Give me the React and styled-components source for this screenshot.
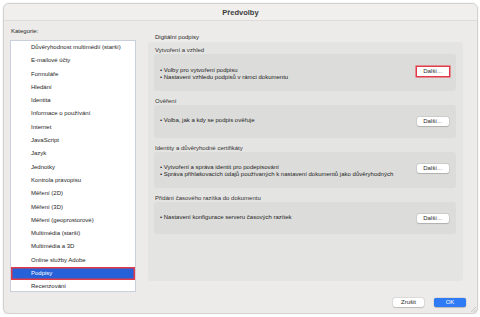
import React from "react";
import styled, { createGlobalStyle } from "styled-components";

const GlobalStyle = createGlobalStyle`
  html, body {
    margin: 0;
    padding: 0;
    background: #ffffff;
  }
  body {
    font-family: "Liberation Sans", Arial, sans-serif;
  }
`;

const Window = styled.div`
  position: relative;
  box-sizing: border-box;
  margin: 3px 0 0 3px;
  width: 475px;
  height: 311px;
  display: flex;
  flex-direction: column;
  background: #ecebe9;
  border: 0.5px solid #d2d1cf;
  border-radius: 6px;
  box-shadow: 0 0.5px 2px rgba(0, 0, 0, 0.12);
  overflow: hidden;
`;

const TitleBar = styled.div`
  height: 16px;
  flex: none;
  display: flex;
  align-items: center;
  justify-content: center;
  background: #f0efee;
  border-bottom: 1px solid #dddcda;
  font-size: 7.5px;
  font-weight: 700;
  color: #3a3a3a;
`;

const Body = styled.div`
  display: flex;
  gap: 12px;
  padding: 6px 14px 0 6px;
`;

const LeftColumn = styled.div`
  width: 126px;
  flex: none;
  display: flex;
  flex-direction: column;
`;

const FieldLabel = styled.div`
  height: 8px;
  line-height: 8px;
  font-size: 6px;
  color: #2a2a2a;
  padding-left: 1px;
  margin-bottom: ${(p) => p.$gap || 0}px;
`;

const CategoryList = styled.ul`
  list-style: none;
  margin: 0;
  padding: 0;
  box-sizing: border-box;
  height: 252px;
  background: #ffffff;
  border: 0.5px solid #c9cfdb;
  overflow: hidden;
`;

const CategoryItem = styled.li`
  box-sizing: border-box;
  height: 13.3px;
  line-height: 13.3px;
  padding-left: 20px;
  font-size: 6px;
  white-space: nowrap;
  color: ${(p) => (p.$selected ? "#ffffff" : "#1e1e1e")};
  background: ${(p) => (p.$selected ? "#2761d8" : "transparent")};
  box-shadow: ${(p) => (p.$selected ? "inset 0 0 0 1.5px #e23a48" : "none")};
`;

const RightColumn = styled.div`
  flex: 1;
  display: flex;
  flex-direction: column;
  padding-top: 6px;
`;

const GroupTitle = styled.div`
  height: 8px;
  line-height: 8px;
  font-size: 6px;
  color: #2a2a2a;
  padding-left: 7px;
  margin-bottom: 1px;
`;

const GroupBox = styled.div`
  box-sizing: border-box;
  height: 239px;
  background: #e4e4e2;
  border-radius: 3px;
  padding: 4px 7px 0 6px;
  display: flex;
  flex-direction: column;
  gap: 6px;
`;

const Section = styled.div`
  display: flex;
  flex-direction: column;
`;

const SectionLabel = styled.div`
  height: 8px;
  line-height: 8px;
  font-size: 6px;
  color: #333;
  padding-left: 1px;
`;

const SectionBox = styled.div`
  box-sizing: border-box;
  height: ${(p) => p.$h}px;
  padding: ${(p) => p.$top}px 7px 0 6px;
  background: #dcdcda;
  border-radius: 3px;
  display: flex;
  align-items: flex-start;
  justify-content: space-between;
`;

const Bullets = styled.div`
  display: flex;
  flex-direction: column;
`;

const Bullet = styled.div`
  height: 7px;
  line-height: 7px;
  font-size: 6px;
  color: #1e1e1e;
  white-space: nowrap;
`;

const PushButton = styled.button`
  box-sizing: border-box;
  flex: none;
  width: ${(p) => p.$w || 32}px;
  height: 9px;
  padding: 0;
  margin: 0;
  border: none;
  border-radius: ${(p) => (p.$highlight ? 0 : 2)}px;
  background: ${(p) => (p.$primary ? "#2f7bf5" : "#ffffff")};
  color: ${(p) => (p.$primary ? "#ffffff" : "#2a2a2a")};
  font-family: "Liberation Sans", Arial, sans-serif;
  font-size: 6px;
  line-height: 9px;
  box-shadow: ${(p) =>
    p.$highlight
      ? "0 0 0 1.5px #e23a48"
      : "0 0 0 0.5px rgba(0, 0, 0, 0.12), 0 0.5px 1px rgba(0, 0, 0, 0.15)"};
`;

const Footer = styled.div`
  display: flex;
  justify-content: flex-end;
  gap: 10px;
  padding: 6px 11px 0 0;
`;

const Grip = styled.svg`
  position: absolute;
  right: 1px;
  bottom: 1px;
`;

const categories = [
  "Důvěryhodnost multimédií (starší)",
  "E-mailové účty",
  "Formuláře",
  "Hledání",
  "Identita",
  "Informace o používání",
  "Internet",
  "JavaScript",
  "Jazyk",
  "Jednotky",
  "Kontrola pravopisu",
  "Měření (2D)",
  "Měření (3D)",
  "Měření (geoprostorové)",
  "Multimédia (starší)",
  "Multimédia a 3D",
  "Online služby Adobe",
  "Podpisy",
  "Recenzování",
];

const sections = [
  {
    title: "Vytvoření a vzhled",
    h: 37,
    top: 13,
    highlight: true,
    lines: [
      "• Volby pro vytvoření podpisu",
      "• Nastavení vzhledu podpisů v rámci dokumentu",
    ],
  },
  {
    title: "Ověření",
    h: 33,
    top: 12,
    lines: ["• Volba, jak a kdy se podpis ověřuje"],
  },
  {
    title: "Identity a důvěryhodné certifikáty",
    h: 36,
    top: 12,
    lines: [
      "• Vytvoření a správa identit pro podepisování",
      "• Správa přihlašovacích údajů používaných k nastavení dokumentů jako důvěryhodných",
    ],
  },
  {
    title: "Přidání časového razítka do dokumentu",
    h: 32,
    top: 12,
    lines: ["• Nastavení konfigurace serveru časových razítek"],
  },
];

export default function App() {
  return (
    <>
      <GlobalStyle />
      <Window>
        <TitleBar>Předvolby</TitleBar>
        <Body>
          <LeftColumn>
            <FieldLabel $gap={5}>Kategorie:</FieldLabel>
            <CategoryList>
              {categories.map((c) => (
                <CategoryItem key={c} $selected={c === "Podpisy"}>
                  {c}
                </CategoryItem>
              ))}
            </CategoryList>
          </LeftColumn>
          <RightColumn>
            <GroupTitle>Digitální podpisy</GroupTitle>
            <GroupBox>
              {sections.map((s) => (
                <Section key={s.title}>
                  <SectionLabel>{s.title}</SectionLabel>
                  <SectionBox $h={s.h} $top={s.top}>
                    <Bullets>
                      {s.lines.map((l) => (
                        <Bullet key={l}>{l}</Bullet>
                      ))}
                    </Bullets>
                    <PushButton $highlight={s.highlight}>Další…</PushButton>
                  </SectionBox>
                </Section>
              ))}
            </GroupBox>
          </RightColumn>
        </Body>
        <Footer>
          <PushButton $w={31}>Zrušit</PushButton>
          <PushButton $w={32} $primary>
            OK
          </PushButton>
        </Footer>
        <Grip width="6" height="6" viewBox="0 0 6 6">
          <path d="M1 6 L6 1 M3.5 6 L6 3.5" stroke="#b5b4b2" strokeWidth="0.6" />
        </Grip>
      </Window>
    </>
  );
}
